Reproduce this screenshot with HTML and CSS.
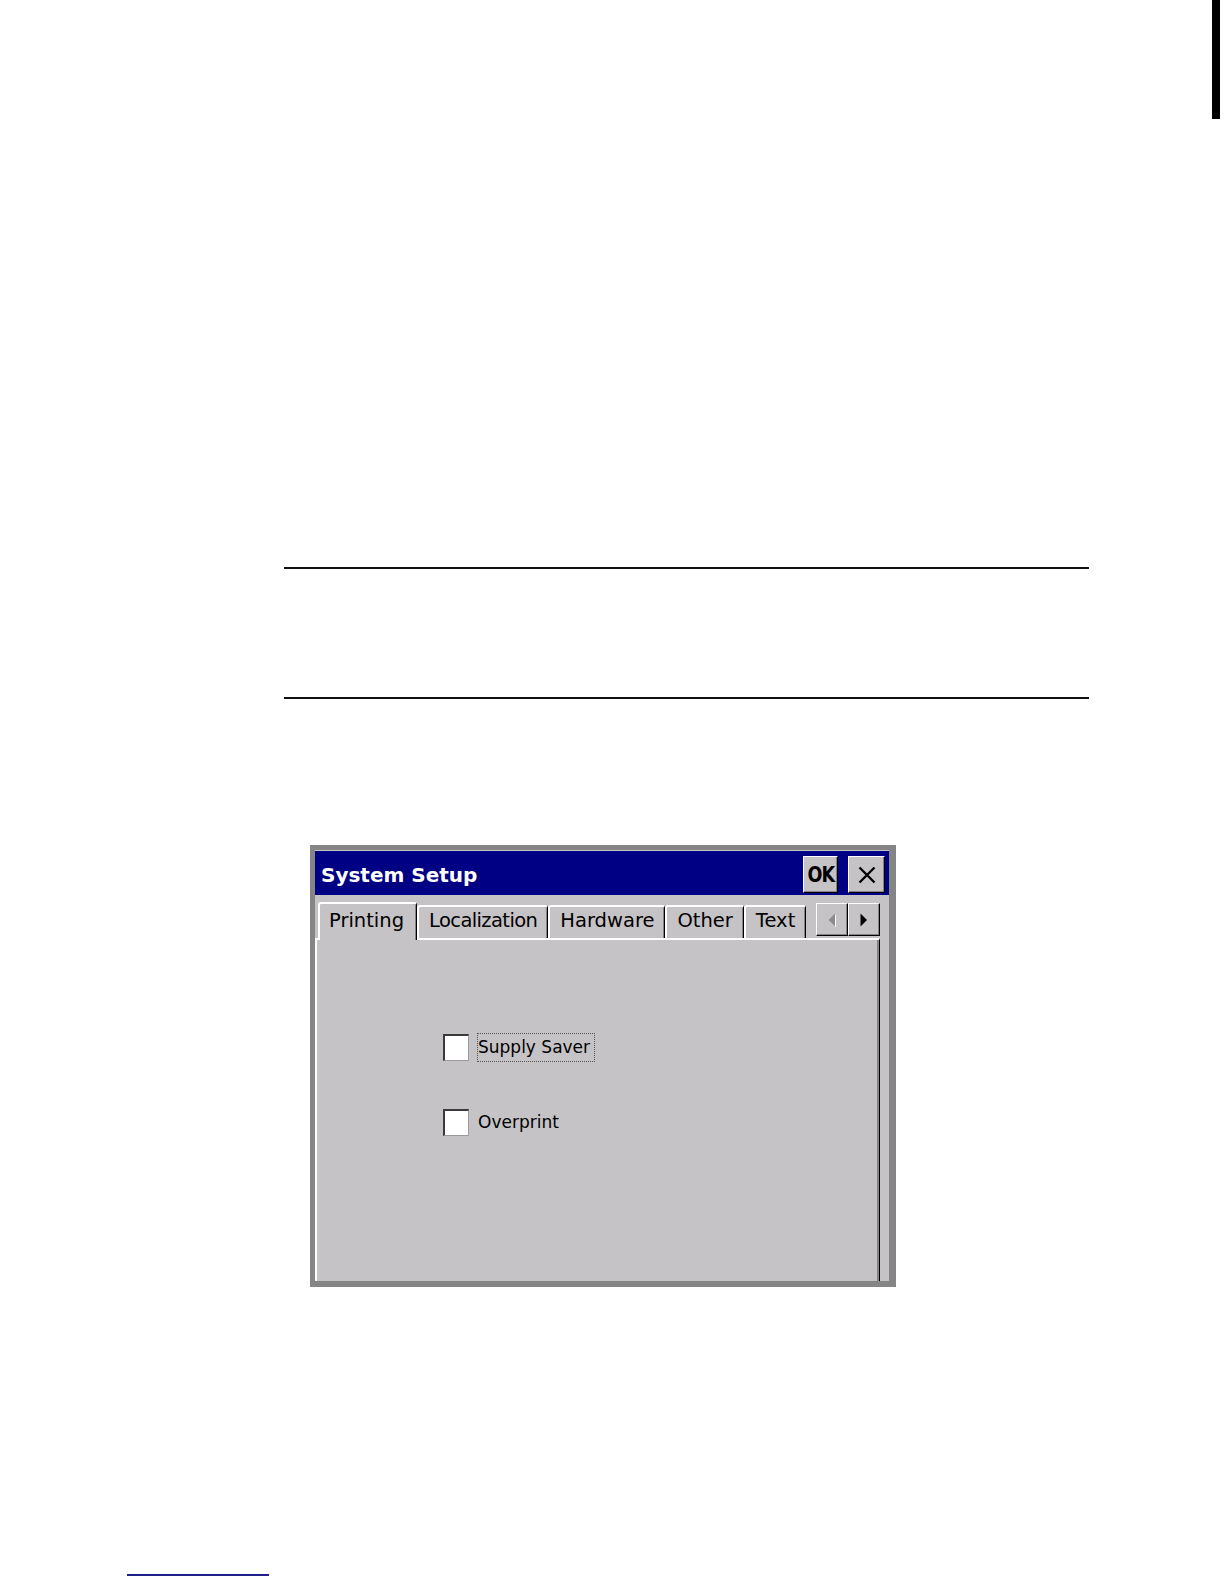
FILE: index.html
```html
<!DOCTYPE html>
<html lang="en">
<head>
<meta charset="utf-8">
<title>System Setup</title>
<link rel="stylesheet" href="styles.css">
</head>
<body>
<div class="page">
  <div class="edge-row"><div class="edge-mark"></div></div>
  <div class="rule rule-top"></div>
  <div class="rule rule-bottom"></div>

  <div class="dialog">
    <div class="titlebar">
      <span class="title">System Setup</span>
      <div class="tb-btn tb-ok"><span class="ok-text">OK</span></div>
      <div class="tb-btn tb-close">
        <svg width="18" height="18" viewBox="0 0 18 18"><path d="M1.5 1.5 L16.5 16.5 M16.5 1.5 L1.5 16.5" stroke="#000" stroke-width="2.4" fill="none"/></svg>
      </div>
    </div>

    <div class="tabs">
      <div class="tab tab-active">Printing</div>
      <div class="tab tab-tight">Localization</div>
      <div class="tab">Hardware</div>
      <div class="tab">Other</div>
      <div class="tab">Text</div>
      <div class="tab-scroll">
        <div class="scroll-btn">
          <svg width="8" height="14" viewBox="0 0 8 14"><polygon points="7,0.5 0.5,7 7,13.5" fill="#fff" transform="translate(1,1)"/><polygon points="7,0.5 0.5,7 7,13.5" fill="#8c8a8c"/></svg>
        </div>
        <div class="scroll-btn">
          <svg width="8" height="14" viewBox="0 0 8 14"><polygon points="0.5,0.5 7,7 0.5,13.5" fill="#000"/></svg>
        </div>
      </div>
    </div>

    <div class="panel">
      <div class="option">
        <span class="check"></span>
        <span class="option-label focused">Supply Saver</span>
      </div>
      <div class="option">
        <span class="check"></span>
        <span class="option-label">Overprint</span>
      </div>
    </div>
  </div>

  <div class="footer-link"></div>
</div>
</body>
</html>
```

FILE: styles.css
```css
html, body {
  margin: 0;
  padding: 0;
  background: #ffffff;
}

.page {
  width: 1224px;
  height: 1584px;
  display: flex;
  flex-direction: column;
  font-family: "DejaVu Sans", "Liberation Sans", sans-serif;
}

.edge-row {
  display: flex;
  justify-content: flex-end;
  padding-right: 4px;
}

.edge-mark {
  width: 8px;
  height: 119px;
  background: #000;
}

.rule {
  margin-left: 284px;
  width: 805px;
  height: 0;
  border-top: 2px solid #111;
}

.rule-top {
  margin-top: 448px;
}

.rule-bottom {
  margin-top: 128px;
}

/* Dialog window */
.dialog {
  margin-left: 310px;
  margin-top: 146px;
  width: 586px;
  height: 442px;
  box-sizing: border-box;
  border: 5px solid #868586;
  border-right-width: 7px;
  border-bottom-width: 6px;
  background: #c6c3c6;
  display: flex;
  flex-direction: column;
}

.titlebar {
  margin-top: 1px;
  height: 44px;
  background: #000084;
  display: flex;
  align-items: center;
  padding: 0 4px 0 6px;
}

.title {
  flex: 1;
  color: #fff;
  font-weight: bold;
  font-size: 20px;
  line-height: 24px;
  padding-top: 3px;
}

.tb-btn {
  width: 35px;
  height: 37px;
  box-sizing: border-box;
  align-self: flex-end;
  margin-bottom: 2px;
  background: #c6c3c6;
  border: 1px solid;
  border-color: #fff #000 #000 #fff;
  box-shadow: inset -1px -1px 0 #848284;
  display: flex;
  align-items: center;
  justify-content: center;
}

.tb-ok {
  margin-right: 10px;
  margin-left: -2px;
}

.tb-close {
  width: 37px;
}

.ok-text {
  font-weight: bold;
  font-size: 22px;
  line-height: 24px;
  letter-spacing: -1px;
  color: #000;
  transform: scaleX(0.8);
}

/* Tabs */
.tabs {
  display: flex;
  align-items: flex-end;
  padding: 7px 9px 0 3px;
  margin-bottom: -2px;
  position: relative;
  z-index: 1;
}

.tab {
  font-size: 19.5px;
  line-height: 23px;
  color: #000;
  padding: 2px 10px 6px;
  margin-bottom: 2px;
  border-top: 2px solid #fff;
  border-left: 2px solid #fff;
  border-right: 1px solid #000;
  box-shadow: inset -1px 0 0 #848284;
  border-radius: 3px 3px 0 0;
  background: #c6c3c6;
}

.tab-active {
  padding: 5px 12px 8px 9px;
  margin-bottom: 0;
}

.tab-tight {
  letter-spacing: -0.6px;
}

.tab-scroll {
  margin-left: auto;
  align-self: flex-start;
  margin-top: 1px;
  display: flex;
}

.scroll-btn {
  width: 32px;
  height: 33px;
  box-sizing: border-box;
  background: #c6c3c6;
  border: 1px solid;
  border-color: #fff #000 #000 #fff;
  box-shadow: inset -1px -1px 0 #848284;
  display: flex;
  align-items: center;
  justify-content: center;
}

/* Panel */
.panel {
  flex: 1;
  margin-right: 9px;
  border-top: 2px solid #fff;
  border-left: 2px solid #fff;
  border-right: 1px solid #000;
  box-shadow: inset -2px 0 0 #848284;
  padding: 93px 0 0 126px;
  display: flex;
  flex-direction: column;
  gap: 46px;
}

.option {
  display: flex;
  align-items: center;
  gap: 8px;
}

.check {
  width: 26px;
  height: 27px;
  box-sizing: border-box;
  background: #fff;
  border-top: 2px solid #3a3a3a;
  border-left: 2px solid #3a3a3a;
  border-right: 1px solid #9c9a9c;
  border-bottom: 1px solid #9c9a9c;
}

.option-label {
  font-size: 17px;
  line-height: 21px;
  color: #000;
  padding: 3px 4px 3px 0;
  border: 1px dotted transparent;
}

.focused {
  border-color: #555;
}

.footer-link {
  margin-left: 127px;
  margin-top: 287px;
  width: 142px;
  border-top: 2px solid #20208c;
}
```
